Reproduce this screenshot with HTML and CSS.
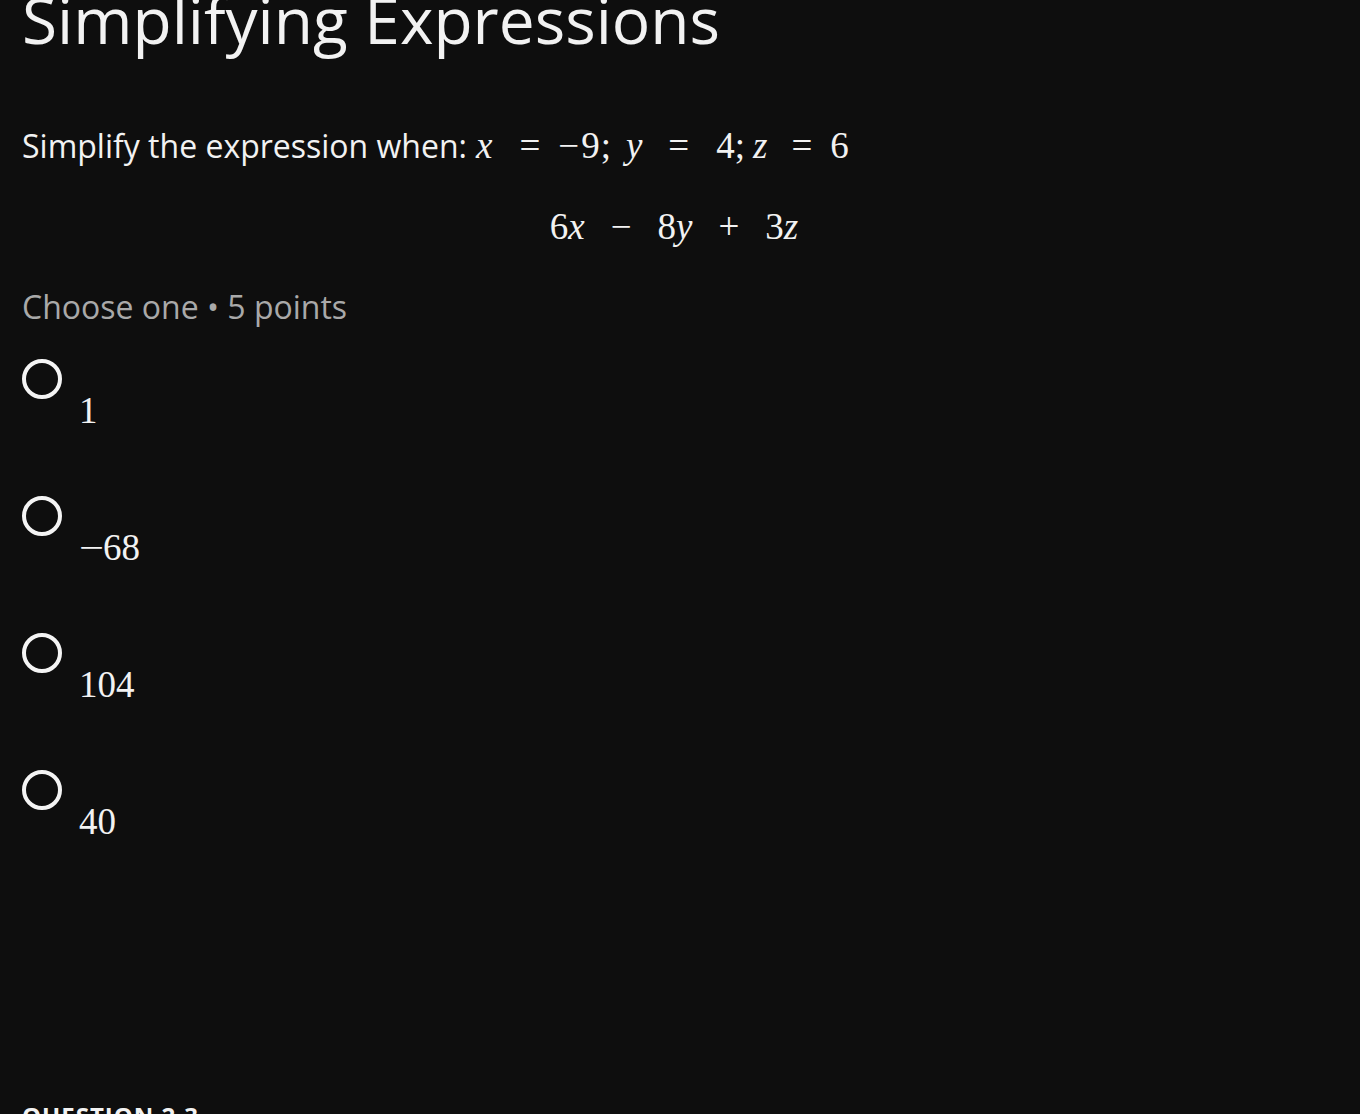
FILE: index.html
```html
<!DOCTYPE html>
<html lang="en">
<head>
<meta charset="utf-8">
<title>Simplifying Expressions</title>
<link rel="stylesheet" href="styles.css">
</head>
<body>
<main class="page">
  <h1 class="title">Simplifying Expressions</h1>
  <p class="prompt">Simplify the expression when:<span class="math inline-math"><i class="v t-x">x</i><span class="t-eq1">=</span><span class="t-m">−</span><span class="t-9">9</span><span class="t-s1">;</span><i class="v t-y">y</i><span class="t-eq2">=</span><span class="t-4">4</span><span>;</span><i class="v t-z">z</i><span class="t-eq3">=</span><span class="t-6">6</span></span></p>
  <div class="display">
    <span class="math"><span>6</span><i class="v">x</i><span class="bin">−</span><span>8</span><i class="v">y</i><span class="bin">+</span><span>3</span><i class="v">z</i></span>
  </div>
  <p class="meta">Choose one • 5 points</p>
  <ul class="options">
    <li class="option"><span class="radio"></span><span class="math label">1</span></li>
    <li class="option"><span class="radio"></span><span class="math label"><span class="minus">−</span>68</span></li>
    <li class="option"><span class="radio"></span><span class="math label">104</span></li>
    <li class="option"><span class="radio"></span><span class="math label">40</span></li>
  </ul>
  <h2 class="next">QUESTION 2.3</h2>
</main>
</body>
</html>
```
FILE: styles.css
```css
html, body {
  margin: 0;
  padding: 0;
  background: #0e0e0e;
  color: #f2f2f2;
  font-family: "Open Sans", "Noto Sans", sans-serif;
}
.page {
  padding: 0 22px;
  overflow: hidden;
  height: 1114px;
}
.title {
  margin: -20px 0 0 0;
  font-size: 64px;
  font-weight: 400;
  line-height: 80px;
}
.prompt {
  margin: 64px 0 0 0;
  font-size: 32px;
  line-height: 44px;
  display: flex;
  align-items: baseline;
}
.math {
  font-family: "Liberation Serif", "DejaVu Serif", serif;
  font-size: 37px;
  font-style: normal;
}
.v { font-style: italic; }
.minus {
  display: inline-block;
  padding: 0 3px 0 0;
  transform: scaleX(1.2);
  transform-origin: left center;
}
.inline-math {
  display: inline-flex;
  align-items: baseline;
  line-height: 44px;
  margin-left: 9px;
}
.inline-math > * { display: inline-block; }
.t-eq1 { margin-left: 27px; }
.t-m { margin-left: 18px; }
.t-9 { margin-left: 2px; }
.t-s1 { margin-left: 1px; }
.t-y { margin-left: 15px; }
.t-eq2 { margin-left: 26px; }
.t-4 { margin-left: 27px; }
.t-z { margin-left: 8px; }
.t-eq3 { margin-left: 24px; }
.t-6 { margin-left: 18px; }
.display {
  margin-top: 34px;
  padding-right: 12px;
  text-align: center;
  line-height: 50px;
}
.display .bin {
  display: inline-block;
  margin: 0 26px;
}
.meta {
  margin: 27px 0 0 0;
  font-size: 32px;
  line-height: 44px;
  color: #a9a9a9;
}
.options {
  list-style: none;
  margin: 30px 0 0 0;
  padding: 0;
  display: flex;
  flex-direction: column;
  gap: 97px;
}
.option {
  display: flex;
  align-items: flex-start;
  gap: 17px;
  height: 40px;
}
.radio {
  flex: none;
  width: 32px;
  height: 32px;
  border: 4px solid #f4f4f4;
  border-radius: 50%;
}
.label {
  margin-top: 32px;
  line-height: 40px;
}
.next {
  margin: 290px 0 0 0;
  font-size: 24px;
  font-weight: 700;
  letter-spacing: 1px;
  line-height: 32px;
}
```
